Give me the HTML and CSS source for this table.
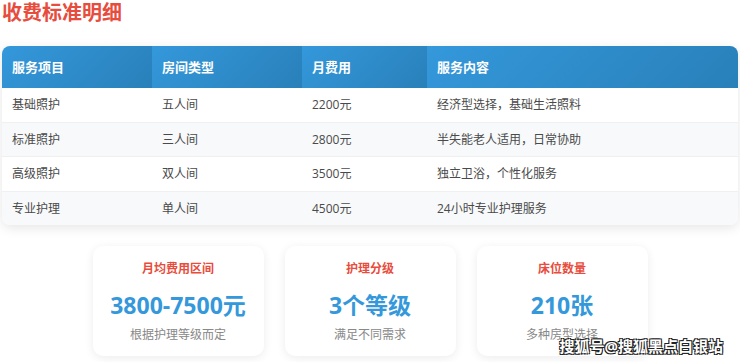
FILE: index.html
```html
<!DOCTYPE html>
<html lang="zh-CN">
<head>
    <meta charset="UTF-8">
    <meta name="viewport" content="width=device-width, initial-scale=1.0">
    <title>收费标准明细</title>
    <link rel="stylesheet" href="styles.css">
</head>
<body>
    <h2 class="section-title">收费标准明细</h2>

    <div class="table-wrap">
        <table class="fee-table">
            <thead>
                <tr>
                    <th class="col-item">服务项目</th>
                    <th class="col-room">房间类型</th>
                    <th class="col-fee">月费用</th>
                    <th class="col-desc">服务内容</th>
                </tr>
            </thead>
            <tbody>
                <tr>
                    <td>基础照护</td>
                    <td>五人间</td>
                    <td>2200元</td>
                    <td>经济型选择，基础生活照料</td>
                </tr>
                <tr>
                    <td>标准照护</td>
                    <td>三人间</td>
                    <td>2800元</td>
                    <td>半失能老人适用，日常协助</td>
                </tr>
                <tr>
                    <td>高级照护</td>
                    <td>双人间</td>
                    <td>3500元</td>
                    <td>独立卫浴，个性化服务</td>
                </tr>
                <tr>
                    <td>专业护理</td>
                    <td>单人间</td>
                    <td>4500元</td>
                    <td>24小时专业护理服务</td>
                </tr>
            </tbody>
        </table>
    </div>

    <div class="stats">
        <div class="stat-card">
            <div class="stat-label">月均费用区间</div>
            <div class="stat-value">3800-7500元</div>
            <div class="stat-note">根据护理等级而定</div>
        </div>
        <div class="stat-card">
            <div class="stat-label">护理分级</div>
            <div class="stat-value">3个等级</div>
            <div class="stat-note">满足不同需求</div>
        </div>
        <div class="stat-card">
            <div class="stat-label">床位数量</div>
            <div class="stat-value">210张</div>
            <div class="stat-note">多种房型选择</div>
        </div>
    </div>

    <div class="watermark">搜狐号@搜狐黑点白银站</div>
</body>
</html>
```

FILE: styles.css
```css
body {
    margin: 0;
    padding: 0 2px;
    font-family: "Open Sans", "Noto Sans CJK SC", sans-serif;
    background-color: #fff;
    color: #444;
    position: relative;
    height: 362px;
    overflow: hidden;
}
.section-title {
    margin: 0;
    font-size: 20px;
    line-height: 25px;
    font-weight: bold;
    color: #e74c3c;
}
.table-wrap {
    margin-top: 21px;
    border-radius: 8px;
    overflow: hidden;
    box-shadow: 0 3px 12px rgba(0, 0, 0, 0.1);
}
.fee-table {
    width: 100%;
    border-collapse: collapse;
    table-layout: fixed;
    font-size: 12px;
}
.fee-table th {
    background: linear-gradient(135deg, #3498db, #2980b9);
    color: #fff;
    font-size: 13px;
    font-weight: bold;
    text-align: left;
    padding: 12px 10px;
    line-height: 18px;
}
.col-item, .col-room {
    width: 130px;
}
.col-fee {
    width: 105px;
}
.fee-table td {
    padding: 8px 10px;
    line-height: 17.5px;
    border-bottom: 1px solid #eef0f2;
    color: #4a4a4a;
}
.fee-table tbody tr:nth-child(even) {
    background-color: #f7f9fa;
}
.fee-table tbody tr:last-child td {
    border-bottom: none;
}
.stats {
    display: grid;
    grid-template-columns: repeat(3, 171px);
    gap: 21px;
    justify-content: center;
    margin-top: 21px;
}
.stat-card {
    background-color: #fff;
    border-radius: 10px;
    padding: 14px 10px 12px;
    text-align: center;
    box-shadow: 0 2px 10px rgba(0, 0, 0, 0.08);
}
.stat-label {
    font-size: 12px;
    line-height: 18px;
    font-weight: bold;
    color: #e74c3c;
}
.stat-value {
    margin: 12px 0 6px;
    font-size: 23px;
    line-height: 30px;
    font-weight: bold;
    color: #3498db;
}
.stat-note {
    font-size: 12px;
    line-height: 18px;
    color: #888;
}
.watermark {
    position: absolute;
    right: 17px;
    bottom: 6px;
    font-size: 15px;
    font-weight: bold;
    color: #fff;
    text-shadow: 1px 1px 0 #222, -1px -1px 0 #222, 1px -1px 0 #222, -1px 1px 0 #222;
}
```
